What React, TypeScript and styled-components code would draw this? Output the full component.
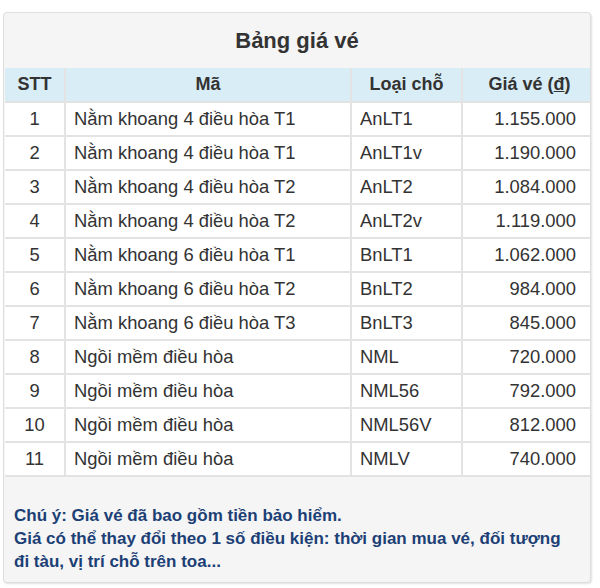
import styled, { createGlobalStyle } from "styled-components";

const GlobalStyle = createGlobalStyle`
  body {
    margin: 0;
    background: #ffffff;
    font-family: "Liberation Sans", Arial, sans-serif;
  }
`;

interface IFare {
  stt: number;
  name: string;
  code: string;
  price: string;
}

const fares: IFare[] = [
  { stt: 1, name: "Nằm khoang 4 điều hòa T1", code: "AnLT1", price: "1.155.000" },
  { stt: 2, name: "Nằm khoang 4 điều hòa T1", code: "AnLT1v", price: "1.190.000" },
  { stt: 3, name: "Nằm khoang 4 điều hòa T2", code: "AnLT2", price: "1.084.000" },
  { stt: 4, name: "Nằm khoang 4 điều hòa T2", code: "AnLT2v", price: "1.119.000" },
  { stt: 5, name: "Nằm khoang 6 điều hòa T1", code: "BnLT1", price: "1.062.000" },
  { stt: 6, name: "Nằm khoang 6 điều hòa T2", code: "BnLT2", price: "984.000" },
  { stt: 7, name: "Nằm khoang 6 điều hòa T3", code: "BnLT3", price: "845.000" },
  { stt: 8, name: "Ngồi mềm điều hòa", code: "NML", price: "720.000" },
  { stt: 9, name: "Ngồi mềm điều hòa", code: "NML56", price: "792.000" },
  { stt: 10, name: "Ngồi mềm điều hòa", code: "NML56V", price: "812.000" },
  { stt: 11, name: "Ngồi mềm điều hòa", code: "NMLV", price: "740.000" },
];

const Page = styled.div`
  padding: 12px 8px 6px 3px;
`;

const Panel = styled.div`
  width: 586px;
  background: #f5f5f5;
  border: 1px solid #dedede;
  border-radius: 4px;
  box-shadow: 1px 1px 2px rgba(0, 0, 0, 0.12);
  overflow: hidden;
`;

const Title = styled.h3`
  margin: 0;
  height: 55px;
  display: flex;
  align-items: center;
  justify-content: center;
  font-size: 22px;
  font-weight: bold;
  color: #333333;
`;

const Table = styled.table`
  width: 585px;
  margin-left: 1px;
  border-collapse: collapse;
  table-layout: fixed;
  font-size: 18.4px;
  color: #333333;
`;

const HeadCell = styled.th<{ $w: number }>`
  width: ${(p) => p.$w}px;
  height: 33px;
  padding: 0;
  background: #d9edf7;
  border: 2px solid #e3e3e3;
  border-top: none;
  font-weight: bold;
  font-size: 18px;
  text-align: center;
  &:first-child { border-left: none; }
  &:last-child { border-right: none; }
`;

const Cell = styled.td<{ $align?: "left" | "center" | "right" }>`
  height: 32px;
  padding: 0 12px 0 8px;
  background: #ffffff;
  border: 2px solid #e3e3e3;
  text-align: ${(p) => p.$align ?? "left"};
  white-space: nowrap;
  &:first-child { border-left: none; padding: 0; }
  &:last-child { border-right: none; padding-right: 20px; }
`;

const Note = styled.div`
  padding: 27px 10px 9px 10px;
  font-size: 17px;
  line-height: 23px;
  font-weight: bold;
  color: #1c3f75;
`;

const App = () => {
  return (
    <>
      <GlobalStyle />
      <Page>
        <Panel>
          <Title>Bảng giá vé</Title>
          <Table>
            <thead>
              <tr>
                <HeadCell $w={59}>STT</HeadCell>
                <HeadCell $w={284}>Mã</HeadCell>
                <HeadCell $w={109}>Loại chỗ</HeadCell>
                <HeadCell $w={133}>
                  Giá vé (<u>đ</u>)
                </HeadCell>
              </tr>
            </thead>
            <tbody>
              {fares.map((row) => (
                <tr key={row.stt}>
                  <Cell $align="center">{row.stt}</Cell>
                  <Cell>{row.name}</Cell>
                  <Cell>{row.code}</Cell>
                  <Cell $align="right">{row.price}</Cell>
                </tr>
              ))}
            </tbody>
          </Table>
          <Note>
            Chú ý: Giá vé đã bao gồm tiền bảo hiểm.
            <br />
            Giá có thể thay đổi theo 1 số điều kiện: thời gian mua vé, đối tượng
            <br />
            đi tàu, vị trí chỗ trên toa...
          </Note>
        </Panel>
      </Page>
    </>
  );
};

export default App;
